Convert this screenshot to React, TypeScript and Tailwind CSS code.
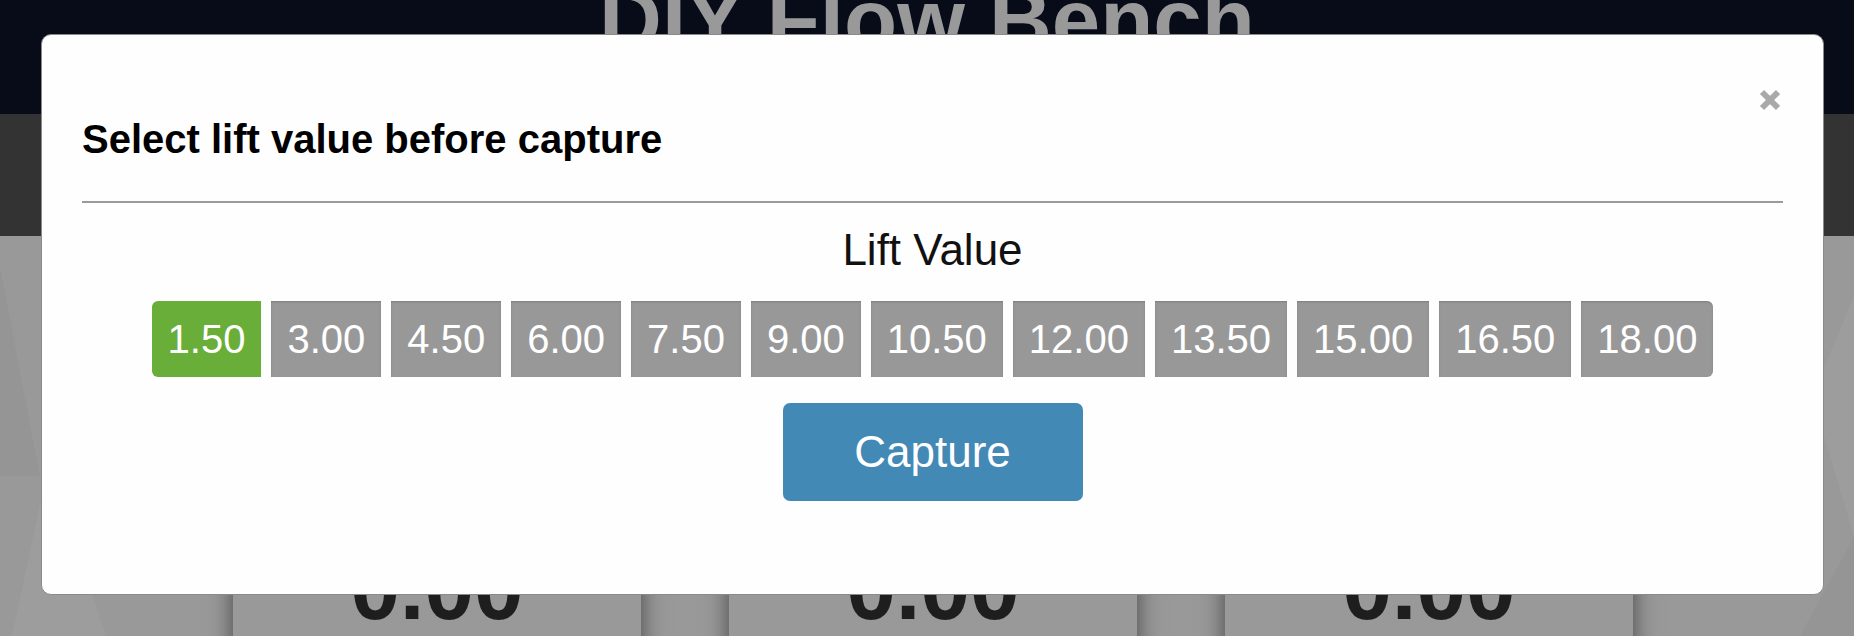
const lifts = ['1.50', '3.00', '4.50', '6.00', '7.50', '9.00', '10.50', '12.00', '13.50', '15.00', '16.50', '18.00']

function CloseIcon() {
  return (
    <svg width="22" height="22" viewBox="0 0 22 22" aria-hidden="true">
      <line x1="3" y1="3" x2="19" y2="19" stroke="#a9a9a9" strokeWidth="6" />
      <line x1="19" y1="3" x2="3" y2="19" stroke="#a9a9a9" strokeWidth="6" />
    </svg>
  )
}

export default function App() {
  const selected = 0

  return (
    <div className="relative h-[636px] w-full overflow-hidden bg-[#999999] font-['Liberation_Sans',Arial,sans-serif]">
      {/* page behind the dialog */}
      <header className="flex h-[114px] justify-center overflow-hidden bg-[#080c19]">
        <h1 className="-mt-[24px] text-[87px] font-bold leading-[87px] text-[#999999]">DIY Flow Bench</h1>
      </header>
      <div className="h-[122px] bg-[#333333]" />
      <main className="relative h-[400px]">
        <svg className="absolute inset-0 h-full w-full" aria-hidden="true">
          <polygon points="12,400 48,230 106,400" fill="#ffffff" fillOpacity="0.04" />
          <polygon points="0,30 40,240 0,240" fill="#000000" fillOpacity="0.025" />
          <polygon points="1854,60 1812,160 1854,300" fill="#ffffff" fillOpacity="0.04" />
          <polygon points="1854,300 1800,400 1854,400" fill="#000000" fillOpacity="0.025" />
        </svg>
        <div className="relative flex gap-[88px] pl-[233px] pt-[234px]">
          {[0, 1, 2].map((i) => (
            <div
              key={i}
              className="flex h-[300px] w-[408px] justify-center bg-[#999999] pt-[74px] shadow-[0_0_22px_rgba(0,0,0,0.55)]"
            >
              <span className="text-[89px] font-bold leading-[89px] text-[#1e1e1e]">0.00</span>
            </div>
          ))}
        </div>
      </main>

      {/* dialog */}
      <div className="absolute left-[41px] top-[34px] h-[561px] w-[1783px] rounded-[10px] border border-[#8a8a8a] bg-[#fefefe] px-[40px]">
        <button className="absolute right-[42px] top-[54px]" aria-label="Close">
          <CloseIcon />
        </button>
        <h4 className="pt-[82px] text-[40px] font-bold leading-[44px] text-black">Select lift value before capture</h4>
        <div className="mt-[40px] border-t-2 border-[#9a9a9a]" />
        <p className="mt-[20px] text-center text-[44px] leading-[53px] text-[#111111]">Lift Value</p>
        <div className="mt-[25px] flex justify-center gap-[10px]">
          {lifts.map((v, i) => (
            <button
              key={v}
              className={`flex h-[76px] items-center px-[16px] text-[40px] text-white ${
                i === selected ? 'bg-[#69ae38]' : 'bg-[#989898] shadow-[inset_0_1px_2px_rgba(0,0,0,0.18)]'
              } ${i === 0 ? 'rounded-l-[6px]' : ''} ${i === lifts.length - 1 ? 'rounded-r-[6px]' : ''}`}
            >
              {v}
            </button>
          ))}
        </div>
        <div className="mt-[26px] flex justify-center">
          <button className="flex h-[98px] w-[300px] items-center justify-center rounded-[7px] bg-[#4289b6] text-[44px] text-white">
            Capture
          </button>
        </div>
      </div>
    </div>
  )
}
